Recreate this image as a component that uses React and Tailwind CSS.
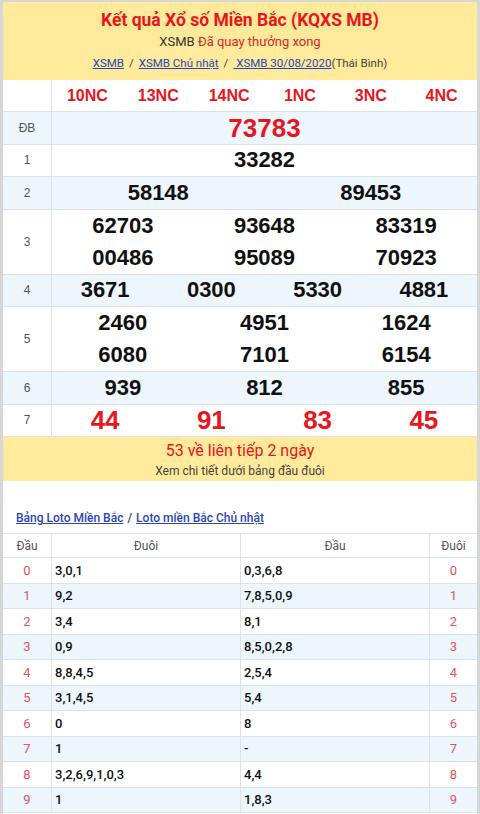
const prizes = [
  { label: 'ĐB', nums: ['73783'], cols: 1, bg: true, special: true },
  { label: '1', nums: ['33282'], cols: 1 },
  { label: '2', nums: ['58148', '89453'], cols: 2, bg: true },
  { label: '3', nums: ['62703', '93648', '83319', '00486', '95089', '70923'], cols: 3, double: true },
  { label: '4', nums: ['3671', '0300', '5330', '4881'], cols: 4, bg: true },
  { label: '5', nums: ['2460', '4951', '1624', '6080', '7101', '6154'], cols: 3, double: true },
  { label: '6', nums: ['939', '812', '855'], cols: 3, bg: true },
  { label: '7', nums: ['44', '91', '83', '45'], cols: 4, special: true },
];

const gridCols = {
  1: 'grid-cols-1',
  2: 'grid-cols-2',
  3: 'grid-cols-3',
  4: 'grid-cols-4',
};

const loto = [
  ['3,0,1', '0,3,6,8'],
  ['9,2', '7,8,5,0,9'],
  ['3,4', '8,1'],
  ['0,9', '8,5,0,2,8'],
  ['8,8,4,5', '2,5,4'],
  ['3,1,4,5', '5,4'],
  ['0', '8'],
  ['1', '-'],
  ['3,2,6,9,1,0,3', '4,4'],
  ['1', '1,8,3'],
];

const heads = ['10NC', '13NC', '14NC', '1NC', '3NC', '4NC'];

function PrizeRow({ row }) {
  return (
    <div
      className={`flex border-b border-[#dde2e8] ${row.double ? 'h-[65px]' : 'h-[32.5px]'} ${row.bg ? 'bg-[#edf5fd]' : 'bg-white'}`}
    >
      <div className="w-[49px] shrink-0 border-r border-[#dde2e8] flex items-center justify-center text-[12px] text-[#555] font-['Liberation_Sans',Arial,sans-serif]">
        {row.label}
      </div>
      <div className={`flex-1 grid ${gridCols[row.cols]} items-center`}>
        {row.nums.map((n, i) => (
          <div
            key={i}
            className={`text-center font-bold font-['Liberation_Sans',Arial,sans-serif] ${row.special ? 'text-[26px] text-[#e8161e]' : 'text-[22px] text-[#111]'} leading-[30px]`}
          >
            {n}
          </div>
        ))}
      </div>
    </div>
  );
}

export default function App() {
  return (
    <div className="w-[480px] h-[814px] overflow-hidden bg-white border-t-2 border-x-[3px] border-[#d6d6d6] font-['Roboto',sans-serif]">
      {/* header */}
      <div className="h-[78px] bg-[#ffe99b] flex flex-col items-center pt-[6px]">
        <div className="text-[17.5px] leading-[25px] font-bold text-[#e8161e]">
          Kết quả Xổ số Miền Bắc (KQXS MB)
        </div>
        <div className="text-[13px] leading-[18px] text-[#333]">
          XSMB <span className="text-[#d42a2a]">Đã quay thưởng xong</span>
        </div>
        <div className="text-[11.5px] leading-[24px] text-[#444]">
          <a className="text-[#2848b8] underline">XSMB</a>
          <span className="mx-[5px]">/</span>
          <a className="text-[#2848b8] underline">XSMB Chủ nhật</a>
          <span className="mx-[5px]">/</span>
          <a className="text-[#2848b8] underline"> XSMB 30/08/2020</a>
          <span>(Thái Bình)</span>
        </div>
      </div>

      {/* results table */}
      <div>
        <div className="flex h-[32px] border-b border-[#dde2e8] bg-white">
          <div className="w-[49px] shrink-0 border-r border-[#dde2e8]" />
          <div className="flex-1 grid grid-cols-6 items-center">
            {heads.map((h) => (
              <div
                key={h}
                className="text-center text-[16px] font-bold text-[#e8161e] font-['Liberation_Sans',Arial,sans-serif]"
              >
                {h}
              </div>
            ))}
          </div>
        </div>
        {prizes.map((row) => (
          <PrizeRow key={row.label} row={row} />
        ))}
      </div>

      {/* streak box */}
      <div className="h-[44px] bg-[#ffe99b] flex flex-col items-center pt-[2px]">
        <div className="text-[16px] leading-[24px] text-[#e8161e]">53 về liên tiếp 2 ngày</div>
        <div className="text-[12px] leading-[16px] text-[#444]">Xem chi tiết dưới bảng đầu đuôi</div>
      </div>

      {/* loto links */}
      <div className="pt-[27px] pl-[13px] h-[52px] text-[12px] leading-[20px] font-medium">
        <a className="text-[#2a47b3] underline">Bảng Loto Miền Bắc</a>
        <span className="text-[#444] mx-[4px]">/</span>
        <a className="text-[#2a47b3] underline">Loto miền Bắc Chủ nhật</a>
      </div>

      {/* loto table */}
      <div className="border-t border-[#dde2e8]">
        <div className="flex h-[24px] border-b border-[#dde2e8] text-[12px] text-[#555] items-stretch">
          <div className="w-[49px] shrink-0 border-r border-[#dde2e8] flex items-center justify-center">Đầu</div>
          <div className="w-[189px] shrink-0 border-r border-[#dde2e8] flex items-center justify-center">Đuôi</div>
          <div className="w-[189px] shrink-0 border-r border-[#dde2e8] flex items-center justify-center">Đầu</div>
          <div className="flex-1 flex items-center justify-center">Đuôi</div>
        </div>
        {loto.map(([a, b], i) => (
          <div
            key={i}
            className={`flex h-[25.5px] border-b border-[#dde2e8] text-[13px] ${i % 2 === 1 ? 'bg-[#edf5fd]' : 'bg-white'}`}
          >
            <div className="w-[49px] shrink-0 border-r border-[#dde2e8] flex items-center justify-center text-[#e8505c]">
              {i}
            </div>
            <div className="w-[189px] shrink-0 border-r border-[#dde2e8] flex items-center pl-[3px] font-medium text-[#111]">
              {a}
            </div>
            <div className="w-[189px] shrink-0 border-r border-[#dde2e8] flex items-center pl-[3px] font-medium text-[#111]">
              {b}
            </div>
            <div className="flex-1 flex items-center justify-center text-[#e8505c]">{i}</div>
          </div>
        ))}
      </div>
    </div>
  );
}
